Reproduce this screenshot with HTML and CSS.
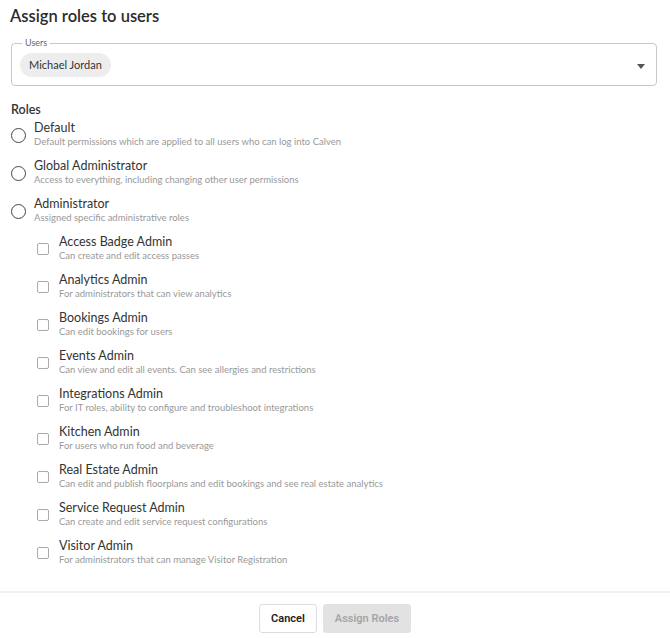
FILE: index.html
```html
<!DOCTYPE html>
<html lang="en">
<head>
  <meta charset="UTF-8" />
  <title>Assign roles to users</title>
  <link rel="stylesheet" href="styles.css">
</head>
<body>
  <div class="dialog">
    <h2 class="title">Assign roles to users</h2>

    <fieldset class="users">
      <legend>Users</legend>
      <span class="chip">Michael Jordan</span>
      <span class="caret"></span>
    </fieldset>

    <div class="roles-label">Roles</div>

    <div class="roles">
      <label class="role">
        <span class="radio"></span>
        <span class="text">
          <span class="name">Default</span>
          <span class="desc">Default permissions which are applied to all users who can log into Calven</span>
        </span>
      </label>
      <label class="role">
        <span class="radio"></span>
        <span class="text">
          <span class="name">Global Administrator</span>
          <span class="desc">Access to everything, including changing other user permissions</span>
        </span>
      </label>
      <label class="role">
        <span class="radio"></span>
        <span class="text">
          <span class="name">Administrator</span>
          <span class="desc">Assigned specific administrative roles</span>
        </span>
      </label>

      <div class="sub-roles">
        <label class="role sub">
          <span class="check"></span>
          <span class="text">
            <span class="name">Access Badge Admin</span>
            <span class="desc">Can create and edit access passes</span>
          </span>
        </label>
        <label class="role sub">
          <span class="check"></span>
          <span class="text">
            <span class="name">Analytics Admin</span>
            <span class="desc">For administrators that can view analytics</span>
          </span>
        </label>
        <label class="role sub">
          <span class="check"></span>
          <span class="text">
            <span class="name">Bookings Admin</span>
            <span class="desc">Can edit bookings for users</span>
          </span>
        </label>
        <label class="role sub">
          <span class="check"></span>
          <span class="text">
            <span class="name">Events Admin</span>
            <span class="desc">Can view and edit all events. Can see allergies and restrictions</span>
          </span>
        </label>
        <label class="role sub">
          <span class="check"></span>
          <span class="text">
            <span class="name">Integrations Admin</span>
            <span class="desc">For IT roles, ability to configure and troubleshoot integrations</span>
          </span>
        </label>
        <label class="role sub">
          <span class="check"></span>
          <span class="text">
            <span class="name">Kitchen Admin</span>
            <span class="desc">For users who run food and beverage</span>
          </span>
        </label>
        <label class="role sub">
          <span class="check"></span>
          <span class="text">
            <span class="name">Real Estate Admin</span>
            <span class="desc">Can edit and publish floorplans and edit bookings and see real estate analytics</span>
          </span>
        </label>
        <label class="role sub">
          <span class="check"></span>
          <span class="text">
            <span class="name">Service Request Admin</span>
            <span class="desc">Can create and edit service request configurations</span>
          </span>
        </label>
        <label class="role sub">
          <span class="check"></span>
          <span class="text">
            <span class="name">Visitor Admin</span>
            <span class="desc">For administrators that can manage Visitor Registration</span>
          </span>
        </label>
      </div>
    </div>
  </div>

  <div class="footer">
    <button class="btn cancel">Cancel</button>
    <button class="btn assign" disabled>Assign Roles</button>
  </div>
</body>
</html>
```

FILE: styles.css
```css
body {
  margin: 0;
  background: white;
  color: #333;
  font-family: Lato, "Open Sans", sans-serif;
}
.dialog {
  padding: 6px 13px 0 11px;
  height: 585px;
}
.title {
  margin: 0 0 0 -1px;
  font-size: 16.5px;
  line-height: 20px;
  font-weight: 600;
  color: #2b2b2b;
}
.users {
  position: relative;
  margin: 12px 0 0 0;
  padding: 5px 8px 7px 8px;
  height: 34px;
  border: 1px solid #c8c8c8;
  border-radius: 4px;
  display: flex;
  align-items: flex-start;
}
.users legend {
  font-size: 9px;
  color: #666;
  padding: 0 3px;
  margin-left: 2px;
  line-height: 10px;
}
.chip {
  background: #ededed;
  border-radius: 12px;
  padding: 0 9px;
  height: 24px;
  line-height: 24px;
  font-size: 11px;
  color: #333;
}
.caret {
  position: absolute;
  right: 11px;
  top: 16px;
  width: 0;
  height: 0;
  border-left: 4px solid transparent;
  border-right: 4px solid transparent;
  border-top: 5px solid #555;
}
.roles-label {
  margin-top: 16px;
  font-size: 12.5px;
  font-weight: 600;
  line-height: 16px;
  color: #333;
}
.roles {
  display: flex;
  flex-direction: column;
  gap: 10px;
  margin-top: 2px;
}
.sub-roles {
  display: flex;
  flex-direction: column;
  gap: 10px;
  padding-left: 26px;
}
.role {
  display: flex;
  align-items: center;
  gap: 8px;
  height: 28px;
}
.role.sub {
  gap: 10px;
}
.radio {
  width: 13px;
  height: 13px;
  border: 1.6px solid #444;
  border-radius: 50%;
  flex: none;
  margin-top: 2px;
}
.check {
  width: 10px;
  height: 10px;
  border: 1.5px solid #aaa;
  border-radius: 2px;
  flex: none;
  margin-top: 1px;
}
.text {
  display: flex;
  flex-direction: column;
}
.name {
  font-size: 12.5px;
  line-height: 15px;
  color: #333;
}
.desc {
  font-size: 9.5px;
  line-height: 13px;
  color: #999;
}
.footer {
  border-top: 2px solid #eef0f3;
  display: flex;
  justify-content: center;
  gap: 6px;
  padding-top: 11px;
}
.btn {
  height: 29px;
  border-radius: 3px;
  font-family: "Liberation Sans Narrow", "Roboto", sans-serif;
  font-size: 11px;
  font-weight: 600;
}
.cancel {
  width: 58px;
  background: white;
  border: 1px solid #ddd;
  color: #222;
}
.assign {
  width: 88px;
  background: #e2e2e2;
  border: 1px solid #e2e2e2;
  color: #a5a5a5;
}
```
